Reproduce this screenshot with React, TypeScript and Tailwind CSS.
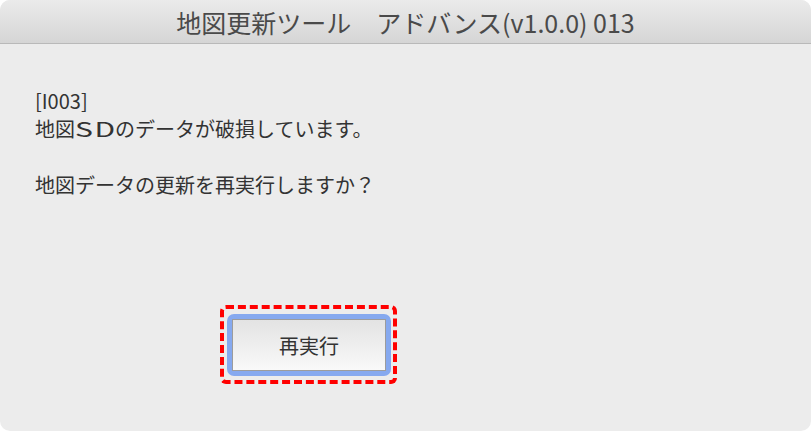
import React from "react";

const jp = '"Noto Sans CJK JP", "Noto Sans", sans-serif';

export default function App() {
  return (
    <div className="w-[811px] h-[431px] bg-white">
      <div
        className="w-[811px] h-[431px] rounded-[10px] overflow-hidden bg-[#ececec] flex flex-col"
        style={{ fontFamily: jp }}
      >
        <div className="h-[44px] shrink-0 bg-gradient-to-b from-[#ebebeb] to-[#d5d5d5] border-b border-[#b9b9b9] flex items-center justify-center">
          <span className="text-[25px] leading-none text-[#4a4a4a] pl-[0px] pt-[2px]">
            地図更新ツール　アドバンス(v1.0.0) 013
          </span>
        </div>
        <div className="flex flex-col pl-[35px] pt-[43px]">
          <div className="text-[20px] leading-[28px] text-[#333333]">
            <div>[I003]</div>
            <div>
              地図
              <span className="inline-block w-[40px] text-[20px] tracking-[1px] scale-x-[1.5] origin-left">SD</span>
              のデータが破損しています。
            </div>
            <div>&nbsp;</div>
            <div>地図データの更新を再実行しますか？</div>
          </div>
          <div className="mt-[106px] ml-[185px] w-[177px] h-[79px] border-[4px] border-dashed border-[#ff0000] rounded-[6px] pl-[3px] pt-[5px]">
            <div className="w-[164px] h-[62px] rounded-[7px] bg-[#86a9ef] p-[5px]">
              <button className="w-full h-full border border-[#9c9c9c] bg-gradient-to-b from-[#e3e3e3] to-[#f9f9f9] flex items-center justify-center text-[20px] leading-none text-[#333333] pt-[1px]">
                再実行
              </button>
            </div>
          </div>
        </div>
      </div>
    </div>
  );
}
